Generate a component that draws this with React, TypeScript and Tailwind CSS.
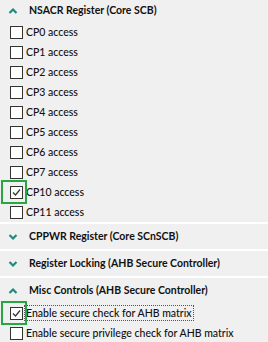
import React from 'react';

const font = { fontFamily: 'Lato, "Open Sans", sans-serif' };

function Chevron({ up }: { up: boolean }) {
  return (
    <svg width="10" height="8" viewBox="0 0 10 8" className="shrink-0">
      <path
        d={up ? 'M1.5 6 L5 2.5 L8.5 6' : 'M1.5 2 L5 5.5 L8.5 2'}
        fill="none"
        stroke="#1f8a7e"
        strokeWidth="2.2"
      />
    </svg>
  );
}

function Header({ title, up, h = 'h-[25px]' }: { title: string; up: boolean; h?: string }) {
  return (
    <div className={'flex items-center gap-[11px] pl-[8px] ' + h}>
      <Chevron up={up} />
      <span className="whitespace-nowrap text-[10.5px] font-bold text-[#111]">{title}</span>
    </div>
  );
}

function Row({ label, checked, highlight, focus }: { label: string; checked?: boolean; highlight?: boolean; focus?: boolean }) {
  return (
    <div className="relative flex h-[20px] items-center pl-[10px]">
      {highlight && (
        <div className="absolute left-[1px] top-[-2px] h-[24px] w-[26px] border-2 border-[#26a744]" />
      )}
      <div className="relative flex h-[13px] w-[13px] shrink-0 items-center justify-center border border-[#333] bg-white">
        {checked && (
          <svg width="11" height="11" viewBox="0 0 11 11">
            <path d="M2 5.5 L4.5 8 L9 2.5" fill="none" stroke="#333" strokeWidth="1.2" />
          </svg>
        )}
      </div>
      <span
        className={
          'ml-[1px] whitespace-nowrap text-[10.5px] font-medium leading-[14px] text-[#111] ' +
          (focus ? 'border border-dotted border-[#555] px-[1px]' : 'px-[2px]')
        }
      >
        {label}
      </span>
    </div>
  );
}

export default function App() {
  const cps = ['CP0', 'CP1', 'CP2', 'CP3', 'CP4', 'CP5', 'CP6', 'CP7', 'CP10', 'CP11'];
  return (
    <div className="flex h-[342px] w-[268px] flex-col gap-[2px] overflow-hidden bg-white" style={font}>
      <div className="h-[224px] bg-[#f0f0f0]">
        <Header title="NSACR Register (Core SCB)" up h="h-[22px]" />
        {cps.map((c) => (
          <Row key={c} label={c + ' access'} checked={c === 'CP10'} highlight={c === 'CP10'} />
        ))}
      </div>
      <div className="bg-[#f0f0f0]">
        <Header title="CPPWR Register (Core SCnSCB)" up={false} />
      </div>
      <div className="bg-[#f0f0f0]">
        <Header title="Register Locking (AHB Secure Controller)" up={false} />
      </div>
      <div className="flex-1 bg-[#f0f0f0]">
        <Header title="Misc Controls (AHB Secure Controller)" up />
        <Row label="Enable secure check for AHB matrix" checked highlight focus />
        <Row label="Enable secure privilege check for AHB matrix" />
      </div>
    </div>
  );
}
